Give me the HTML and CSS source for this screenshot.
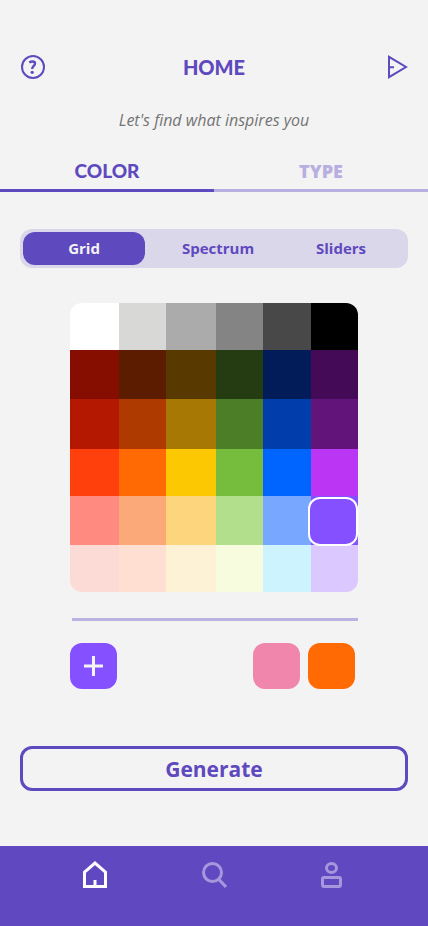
FILE: index.html
```html
<!DOCTYPE html>
<html lang="en">
<head>
<meta charset="utf-8">
<meta name="viewport" content="width=device-width, initial-scale=1">
<title>Home</title>
<link rel="stylesheet" href="styles.css">
</head>
<body>
<header class="topbar">
  <button class="icon-btn" type="button" aria-label="Help">
    <svg width="26" height="26" viewBox="0 0 26 26" fill="none" stroke="currentColor" stroke-width="2"><circle cx="13" cy="13" r="11"/><path d="M9.300 8.600C10.200 7.900 11.300 7.500 12.400 7.500C14.100 7.500 15 8.400 15 9.600C15 12 12.200 12 12.200 15" stroke-width="2.400"/><circle cx="12.200" cy="18.300" r="1.600" fill="currentColor" stroke="none"/></svg>
  </button>
  <h1 class="title">HOME</h1>
  <button class="icon-btn" type="button" aria-label="Send">
    <svg width="21" height="26" viewBox="0 0 21 26" fill="none" stroke="currentColor" stroke-width="2"><path d="M2 2.800V23.200L19 13ZM2 13.300H7"/></svg>
  </button>
</header>
<p class="tagline">Let's find what inspires you</p>
<nav class="tabs" aria-label="Inspiration">
  <a class="tab tab-active" href="#color">COLOR</a>
  <a class="tab" href="#type">TYPE</a>
</nav>
<main class="content" id="color">
  <div class="segments">
    <button class="segment segment-active" type="button">Grid</button>
    <button class="segment" type="button">Spectrum</button>
    <button class="segment" type="button">Sliders</button>
  </div>
  <section class="picker">
    <div class="palette" role="radiogroup" aria-label="Color grid">
      <input type="radio" name="color" aria-label="White" class="swatch white">
      <input type="radio" name="color" aria-label="Light gray" class="swatch gray-1">
      <input type="radio" name="color" aria-label="Silver" class="swatch gray-2">
      <input type="radio" name="color" aria-label="Gray" class="swatch gray-3">
      <input type="radio" name="color" aria-label="Dark gray" class="swatch gray-4">
      <input type="radio" name="color" aria-label="Black" class="swatch black">
      <input type="radio" name="color" aria-label="Darkest red" class="swatch red-1">
      <input type="radio" name="color" aria-label="Darkest orange" class="swatch orange-1">
      <input type="radio" name="color" aria-label="Darkest yellow" class="swatch yellow-1">
      <input type="radio" name="color" aria-label="Darkest green" class="swatch green-1">
      <input type="radio" name="color" aria-label="Darkest blue" class="swatch blue-1">
      <input type="radio" name="color" aria-label="Darkest purple" class="swatch purple-1">
      <input type="radio" name="color" aria-label="Dark red" class="swatch red-2">
      <input type="radio" name="color" aria-label="Dark orange" class="swatch orange-2">
      <input type="radio" name="color" aria-label="Dark yellow" class="swatch yellow-2">
      <input type="radio" name="color" aria-label="Dark green" class="swatch green-2">
      <input type="radio" name="color" aria-label="Dark blue" class="swatch blue-2">
      <input type="radio" name="color" aria-label="Dark purple" class="swatch purple-2">
      <input type="radio" name="color" aria-label="Red" class="swatch red-3">
      <input type="radio" name="color" aria-label="Orange" class="swatch orange-3">
      <input type="radio" name="color" aria-label="Yellow" class="swatch yellow-3">
      <input type="radio" name="color" aria-label="Green" class="swatch green-3">
      <input type="radio" name="color" aria-label="Blue" class="swatch blue-3">
      <input type="radio" name="color" aria-label="Magenta" class="swatch purple-3">
      <input type="radio" name="color" aria-label="Light red" class="swatch red-4">
      <input type="radio" name="color" aria-label="Light orange" class="swatch orange-4">
      <input type="radio" name="color" aria-label="Light yellow" class="swatch yellow-4">
      <input type="radio" name="color" aria-label="Light green" class="swatch green-4">
      <input type="radio" name="color" aria-label="Light blue" class="swatch blue-4">
      <input type="radio" name="color" aria-label="Violet" class="swatch purple-4" checked>
      <input type="radio" name="color" aria-label="Pale red" class="swatch red-5">
      <input type="radio" name="color" aria-label="Pale orange" class="swatch orange-5">
      <input type="radio" name="color" aria-label="Pale yellow" class="swatch yellow-5">
      <input type="radio" name="color" aria-label="Pale green" class="swatch green-5">
      <input type="radio" name="color" aria-label="Pale blue" class="swatch blue-5">
      <input type="radio" name="color" aria-label="Pale purple" class="swatch purple-5">
    </div>
    <hr class="divider">
    <div class="saved">
      <button class="chip chip-add" type="button" aria-label="Add color">
        <svg width="19" height="20" viewBox="0 0 19 20" fill="none" stroke="currentColor" stroke-width="3"><path d="M9.500 0V20M0 10H19"/></svg>
      </button>
      <button class="chip chip-pink" type="button" aria-label="Saved pink"></button>
      <button class="chip chip-orange" type="button" aria-label="Saved orange"></button>
    </div>
  </section>
  <button class="generate" type="button">Generate</button>
</main>
<nav class="bottom-nav" aria-label="Main">
  <a class="nav-link nav-active" href="#home" aria-label="Home"><svg width="24" height="28" viewBox="0 0 24 28" fill="none" stroke="currentColor" stroke-width="3"><path d="M1.500 25.500V11.200L12 2L22.500 11.200V25.500ZM12 25V19"/></svg></a>
  <a class="nav-link" href="#search" aria-label="Search"><svg width="26" height="28" viewBox="0 0 26 28" fill="none" stroke="currentColor" stroke-width="3"><circle cx="11.500" cy="11.500" r="9"/><path d="M17.500 18L25 26"/></svg></a>
  <a class="nav-link" href="#profile" aria-label="Profile"><svg width="24" height="28" viewBox="0 0 24 28" fill="none" stroke="currentColor" stroke-width="3"><ellipse cx="10.500" cy="7" rx="5" ry="4.500"/><rect x="1.500" y="16.500" width="18" height="9" rx="1.500"/></svg></a>
</nav>
</body>
</html>
```
FILE: styles.css
```css
* { box-sizing: border-box; }

body {
  margin: 0;
  min-height: 100vh;
  display: flex;
  flex-direction: column;
  background: #f3f3f3;
  color: #5f49bf;
  font-family: "Open Sans", "Noto Sans", sans-serif;
}

button {
  padding: 0;
  border: 0;
  background: none;
  color: inherit;
  font: inherit;
  cursor: pointer;
}

a { text-decoration: none; }
svg { display: block; }

.topbar {
  display: grid;
  grid-template-columns: 1fr auto 1fr;
  align-items: center;
  padding: 54px 20px 0;
}

.icon-btn { justify-self: start; }
.icon-btn:last-child { justify-self: end; }

.title {
  margin: 0;
  font: 900 20px/26px Lato, sans-serif;
}

.tagline {
  margin: 30px 0 0;
  text-align: center;
  font-size: 16px;
  line-height: 20px;
  font-style: italic;
  color: #737373;
}

.tabs {
  display: grid;
  grid-template-columns: 1fr 1fr;
  margin-top: 28px;
}

.tab {
  padding-bottom: 5px;
  border-bottom: 3px solid #b8aee0;
  text-align: center;
  font-size: 18px;
  line-height: 26px;
  font-weight: 800;
  color: #b8aee0;
}

.tab-active {
  border-color: #5f49bf;
  color: #5f49bf;
  font: 900 19px/26px Lato, sans-serif;
}

.content {
  display: flex;
  flex-direction: column;
  padding: 37px 20px 55px;
}

.segments {
  display: grid;
  grid-template-columns: 122fr 146fr 100fr;
  padding: 3px 17px 3px 3px;
  border-radius: 12px;
  background: #dbd7eb;
}

.segment {
  border-radius: 12px;
  font-size: 15px;
  line-height: 33px;
  font-weight: 700;
}

.segment-active {
  background: #5f49bf;
  color: #f3f3f3;
}

.picker {
  width: 100%;
  max-width: 288px;
  margin: 35px auto 0;
}

.palette {
  display: grid;
  grid-template-columns: 49fr 47fr 50fr 47fr 48fr 47fr;
  grid-template-rows: 47fr 49fr 50fr 47fr 49fr 47fr;
  aspect-ratio: 288 / 289;
  border-radius: 12px;
  overflow: hidden;
}

.swatch {
  appearance: none;
  position: relative;
  margin: 0;
  cursor: pointer;
}

/* selection ring overlaps the neighbouring cells */
.swatch:checked::after {
  content: "";
  position: absolute;
  inset: 1px 0 -1px -3px;
  border: 2px solid #fff;
  border-radius: 12px;
  background: #8550ff;
}

.swatch:checked { z-index: 1; }

.white { background: #fff; }
.gray-1 { background: #d8d8d6; }
.gray-2 { background: #ababab; }
.gray-3 { background: #848484; }
.gray-4 { background: #484848; }
.black { background: #000; }
.red-1 { background: #850e00; }
.orange-1 { background: #5b1c00; }
.yellow-1 { background: #583900; }
.green-1 { background: #253c13; }
.blue-1 { background: #011c58; }
.purple-1 { background: #440a58; }
.red-2 { background: #b51800; }
.orange-2 { background: #ae3a00; }
.yellow-2 { background: #a87804; }
.green-2 { background: #4c7d27; }
.blue-2 { background: #023eab; }
.purple-2 { background: #62147b; }
.red-3 { background: #ff400c; }
.orange-3 { background: #ff6a05; }
.yellow-3 { background: #fcc802; }
.green-3 { background: #76bd3d; }
.blue-3 { background: #0064ff; }
.purple-3 { background: #bb35f4; }
.red-4 { background: #ff8b80; }
.orange-4 { background: #fba978; }
.yellow-4 { background: #fcd57d; }
.green-4 { background: #b2df8c; }
.blue-4 { background: #77a7ff; }
.purple-4 { background: #8550ff; }
.red-5 { background: #fcdbd7; }
.orange-5 { background: #fedfd2; }
.yellow-5 { background: #fdf2d5; }
.green-5 { background: #f7fcdf; }
.blue-5 { background: #ccf3fe; }
.purple-5 { background: #dac8ff; }

.divider {
  height: 3px;
  margin: 26px 0 0 2px;
  border: 0;
  background: #bcb2e2;
}

.saved {
  display: flex;
  gap: 8px;
  margin-top: 22px;
  padding-right: 3px;
}

.chip {
  width: 47px;
  height: 46px;
  border-radius: 12px;
}

.chip-add {
  display: grid;
  place-items: center;
  margin-right: auto;
  background: #8550ff;
  color: #f3f3f3;
}

.chip-pink { background: #f086ac; }
.chip-orange { background: #ff6a05; }

.generate {
  margin-top: 57px;
  padding-top: 2px;
  border: 3px solid #5f49bf;
  border-radius: 12px;
  font-size: 21px;
  line-height: 37px;
  font-weight: 700;
}

.bottom-nav {
  display: grid;
  grid-template-columns: repeat(3, 1fr);
  flex: 1;
  min-height: 80px;
  padding: 15px 36px 0;
  background: #6049c0;
}

.nav-link {
  display: flex;
  justify-content: center;
  align-items: flex-start;
  color: #a697dd;
}

.nav-active { color: #fff; }
```
